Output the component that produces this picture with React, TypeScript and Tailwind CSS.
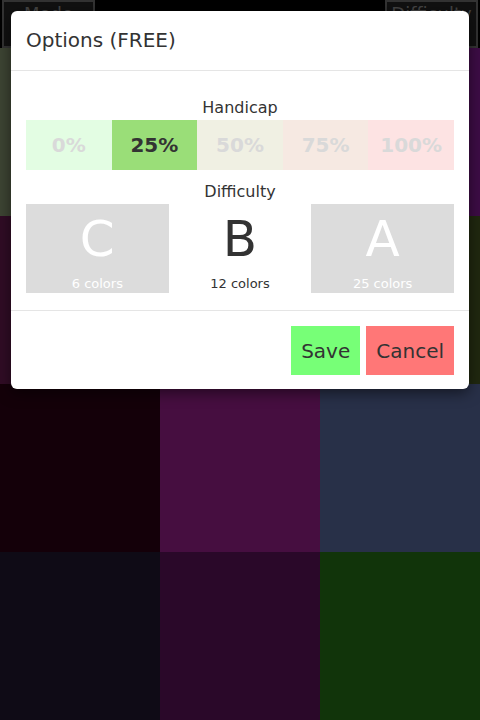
import React, { useState } from 'react';

const tiles = [
  '#3d4433', '#2c1a33', '#3d0c45',
  '#300c25', '#241a2c', '#20280f',
  '#140009', '#460e40', '#283048',
  '#0f0b16', '#2a0829', '#11340a',
];

const handicaps = [
  { label: '0%', bg: 'bg-[#e3fde3]' },
  { label: '25%', bg: 'bg-[#9ade78]' },
  { label: '50%', bg: 'bg-[#f0f0e3]' },
  { label: '75%', bg: 'bg-[#f6e9e2]' },
  { label: '100%', bg: 'bg-[#fde3e3]' },
];

const levels = [
  { letter: 'C', colors: 6 },
  { letter: 'B', colors: 12 },
  { letter: 'A', colors: 25 },
];

export default function App() {
  const [handicap] = useState('25%');
  const [level] = useState('B');

  return (
    <div className="relative w-[480px] h-[720px] overflow-hidden bg-black font-['DejaVu_Sans',sans-serif]">
      {/* Top bar, mostly hidden under the dialog */}
      <div className="h-[48px] flex justify-between px-[2px]">
        <button className="w-[93px] h-[48px] border-2 border-[#333] bg-[#111] text-[#444] text-[18px] leading-[20px] flex justify-center items-start pt-[2px]">
          Mode
        </button>
        <button className="w-[93px] h-[48px] border-2 border-[#333] bg-[#111] text-[#444] text-[18px] leading-[20px] flex justify-center items-start pt-[2px]">
          Difficulty
        </button>
      </div>

      {/* Board */}
      <div className="grid grid-cols-3 grid-rows-4 h-[672px]">
        {tiles.map((c, i) => (
          <div key={i} style={{ backgroundColor: c }} />
        ))}
      </div>

      {/* Options dialog */}
      <div className="absolute top-[11px] left-[11px] w-[458px] bg-white rounded-md shadow-[0_4px_14px_rgba(0,0,0,0.5)] text-[#333]">
        <div className="pt-[17px] pb-[18px] px-[15px] border-b border-[#e5e5e5]">
          <h2 className="text-[20px] leading-[24px]">Options (FREE)</h2>
        </div>

        <div className="pt-[27px] pb-[17px] px-[15px] border-b border-[#e5e5e5]">
          <div className="text-center text-[16px] leading-[20px] mb-[2px]">Handicap</div>
          <div className="flex h-[50px]">
            {handicaps.map((h) => (
              <div
                key={h.label}
                className={`flex-1 flex items-center justify-center text-[20px] font-bold ${h.bg} ${
                  h.label === handicap ? 'text-[#333]' : 'text-[#d9d9d9]'
                }`}
              >
                {h.label}
              </div>
            ))}
          </div>

          <div className="text-center text-[16px] leading-[20px] mt-[12px] mb-[2px]">Difficulty</div>
          <div className="grid grid-cols-3 h-[89px]">
            {levels.map((l) => (
              <div
                key={l.letter}
                className={`flex flex-col items-center pt-[6px] ${
                  l.letter === level ? 'bg-white text-[#333]' : 'bg-[#dcdcdc] text-white'
                }`}
              >
                <div className="text-[50px] leading-[58px]">{l.letter}</div>
                <div className="text-[13px] leading-[16px] mt-[8px]">{l.colors} colors</div>
              </div>
            ))}
          </div>
        </div>

        <div className="flex justify-end gap-[6px] pt-[15px] pb-[14px] px-[15px]">
          <button className="h-[49px] px-[10px] bg-[#77ff77] text-[20px] text-[#333]">Save</button>
          <button className="h-[49px] px-[10px] bg-[#ff7777] text-[20px] text-[#333]">Cancel</button>
        </div>
      </div>
    </div>
  );
}
